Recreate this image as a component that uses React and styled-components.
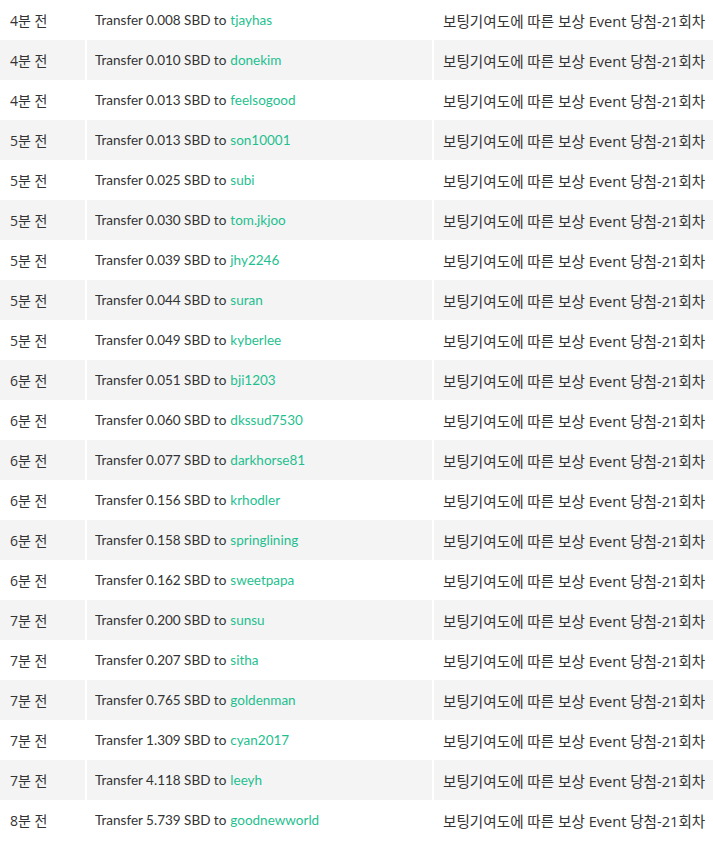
import React from 'react';
import styled, { createGlobalStyle } from 'styled-components';

const Global = createGlobalStyle`
    body {
        margin: 0;
        background: #fff;
        font-family: "Open Sans", "Noto Sans CJK KR", sans-serif;
    }
`;

const Table = styled.div`
    display: flex;
    flex-direction: column;
    width: 713px;
    overflow: hidden;
`;

const Row = styled.div`
    display: grid;
    grid-template-columns: 85px 345px 1fr;
    column-gap: 2px;
    height: 40px;
    background: #fff;
    > div { background: ${p => (p.$striped ? '#f4f4f4' : '#fff')}; }
`;

const Cell = styled.div`
    display: flex;
    align-items: center;
    padding-left: ${p => p.$pad || 10}px;
    font-size: 13px;
    color: #333;
    white-space: nowrap;
`;

const Time = styled(Cell)`
    font-size: 14px;
`;

const Transfer = styled(Cell)`
    font-family: "Lato", "Noto Sans CJK KR", sans-serif;
    font-size: 13.5px;
`;

const Memo = styled(Cell)`
    font-size: 14.6px;
`;

const User = styled.span`
    color: #1fbf8f;
    margin-left: 4px;
`;

const rows = [
    ['4', '0.008', 'tjayhas'], ['4', '0.010', 'donekim'], ['4', '0.013', 'feelsogood'],
    ['5', '0.013', 'son10001'], ['5', '0.025', 'subi'], ['5', '0.030', 'tom.jkjoo'],
    ['5', '0.039', 'jhy2246'], ['5', '0.044', 'suran'], ['5', '0.049', 'kyberlee'],
    ['6', '0.051', 'bji1203'], ['6', '0.060', 'dkssud7530'], ['6', '0.077', 'darkhorse81'],
    ['6', '0.156', 'krhodler'], ['6', '0.158', 'springlining'], ['6', '0.162', 'sweetpapa'],
    ['7', '0.200', 'sunsu'], ['7', '0.207', 'sitha'], ['7', '0.765', 'goldenman'],
    ['7', '1.309', 'cyan2017'], ['7', '4.118', 'leeyh'], ['8', '5.739', 'goodnewworld'],
];

const App = () => (
    <>
        <Global />
        <Table>
            {rows.map(([min, amount, user], i) => (
                <Row key={i} $striped={i % 2 === 1}>
                    <Time>{min}분 전</Time>
                    <Transfer $pad={8}>
                        Transfer {amount} SBD to<User>{user}</User>
                    </Transfer>
                    <Memo $pad={9}>보팅기여도에 따른 보상 Event 당첨-21회차</Memo>
                </Row>
            ))}
        </Table>
    </>
);

export default App;
